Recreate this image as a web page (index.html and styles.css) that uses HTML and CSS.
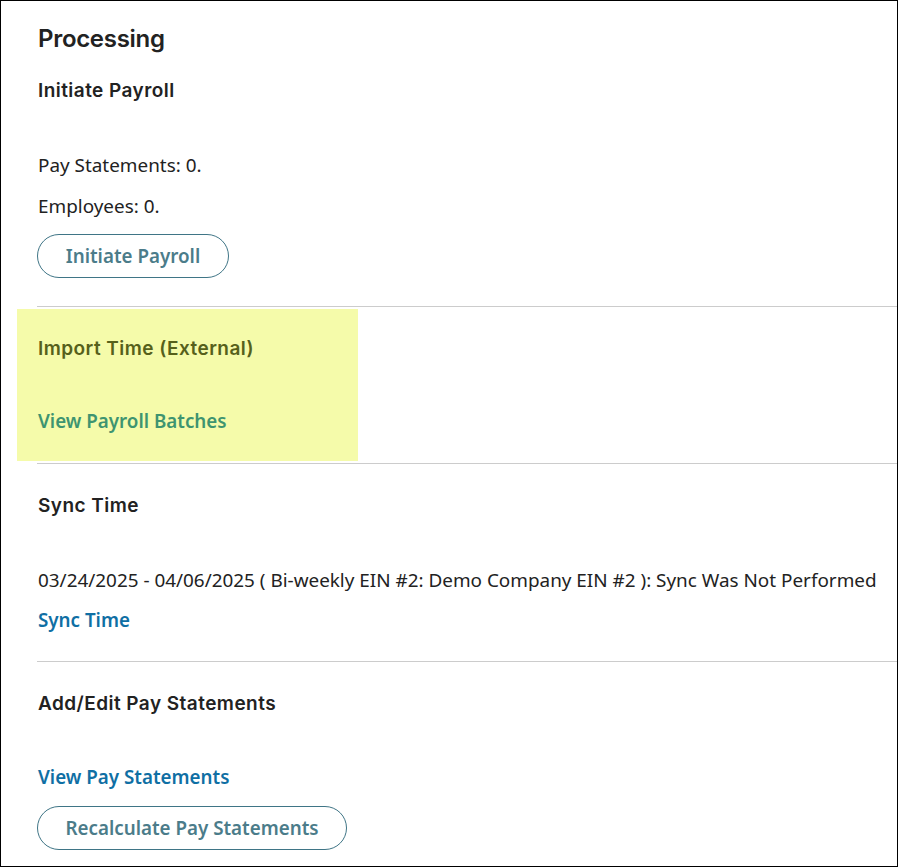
FILE: index.html
```html
<!DOCTYPE html>
<html lang="en">
<head>
<meta charset="utf-8">
<title>Processing</title>
<link rel="stylesheet" href="styles.css">
</head>
<body>
<div class="frame">
  <h1 class="title">Processing</h1>

  <section class="block">
    <h2 class="heading heading-first">Initiate Payroll</h2>
    <p class="text text-first">Pay Statements: 0.</p>
    <p class="text text-next">Employees: 0.</p>
    <button class="pill pill-initiate" type="button">Initiate Payroll</button>
  </section>

  <hr class="divider divider-after-button">

  <section class="highlight">
    <h2 class="heading heading-olive">Import Time (External)</h2>
    <a class="link link-green" href="#">View Payroll Batches</a>
  </section>

  <hr class="divider divider-tight">

  <section class="block">
    <h2 class="heading heading-sync">Sync Time</h2>
    <p class="text text-first">03/24/2025 - 04/06/2025 ( Bi-weekly EIN #2: Demo Company EIN #2 ): Sync Was Not Performed</p>
    <a class="link link-blue link-after-text" href="#">Sync Time</a>
  </section>

  <hr class="divider divider-after-link">

  <section class="block">
    <h2 class="heading heading-sync">Add/Edit Pay Statements</h2>
    <a class="link link-blue link-after-heading" href="#">View Pay Statements</a>
    <button class="pill pill-recalc" type="button">Recalculate Pay Statements</button>
  </section>
</div>
</body>
</html>
```

FILE: styles.css
```css
html, body {
  margin: 0;
  padding: 0;
  background: #ffffff;
}

.frame {
  box-sizing: border-box;
  width: 898px;
  height: 867px;
  border: 1px solid #000000;
  padding: 22px 0 0 36px;
  overflow: hidden;
  display: flex;
  flex-direction: column;
  align-items: flex-start;
  color: #222222;
}

.title {
  margin: 0;
  font-family: "Inter", "Noto Sans", sans-serif;
  font-weight: 600;
  font-size: 24px;
  line-height: 32px;
  letter-spacing: -0.3px;
  color: #222222;
  padding-left: 1px;
}

.block {
  display: flex;
  flex-direction: column;
  align-items: flex-start;
}

.heading {
  margin: 0;
  font-family: "Inter", "Noto Sans", sans-serif;
  font-weight: 600;
  font-size: 19px;
  line-height: 24px;
  letter-spacing: 0.45px;
  color: #222222;
  padding-left: 1px;
}

.heading-first { margin-top: 24px; }
.heading-sync { margin-top: 30px; }

.text {
  margin: 0;
  font-family: "Noto Sans", sans-serif;
  font-size: 18.9px;
  line-height: 24px;
  color: #222222;
  padding-left: 1px;
  white-space: nowrap;
}

.text-first { margin-top: 50px; }
.text-next { margin-top: 17px; }

.pill {
  box-sizing: border-box;
  height: 44px;
  margin-top: 16px;
  padding: 0;
  border: 1px solid #3f7586;
  border-radius: 22px;
  background: #ffffff;
  font-family: "Noto Sans", sans-serif;
  font-weight: 600;
  font-size: 18.8px;
  line-height: 24px;
  color: #4b7c8a;
  cursor: pointer;
}

.pill-initiate { width: 192px; }
.pill-recalc { width: 310px; margin-top: 17px; }

.divider {
  align-self: stretch;
  margin: 0;
  height: 1px;
  border: 0;
  background: #cccccc;
}

.divider-after-button { margin-top: 28px; }
.divider-tight { margin-top: 2px; }
.divider-after-link { margin-top: 29px; }

.highlight {
  box-sizing: border-box;
  width: 341px;
  height: 152px;
  margin: 2px 0 0 -20px;
  padding: 28px 0 0 20px;
  background: #f5fbaa;
  display: flex;
  flex-direction: column;
  align-items: flex-start;
}

.heading-olive { color: #56601b; }

.link {
  font-family: "Noto Sans", sans-serif;
  font-weight: 600;
  font-size: 18.8px;
  line-height: 24px;
  text-decoration: none;
  padding-left: 1px;
}

.link-green {
  color: #3e9470;
  margin-top: 48px;
}

.link-blue { color: #0f6fa4; }
.link-after-text { margin-top: 16px; }
.link-after-heading { margin-top: 49px; }
```
